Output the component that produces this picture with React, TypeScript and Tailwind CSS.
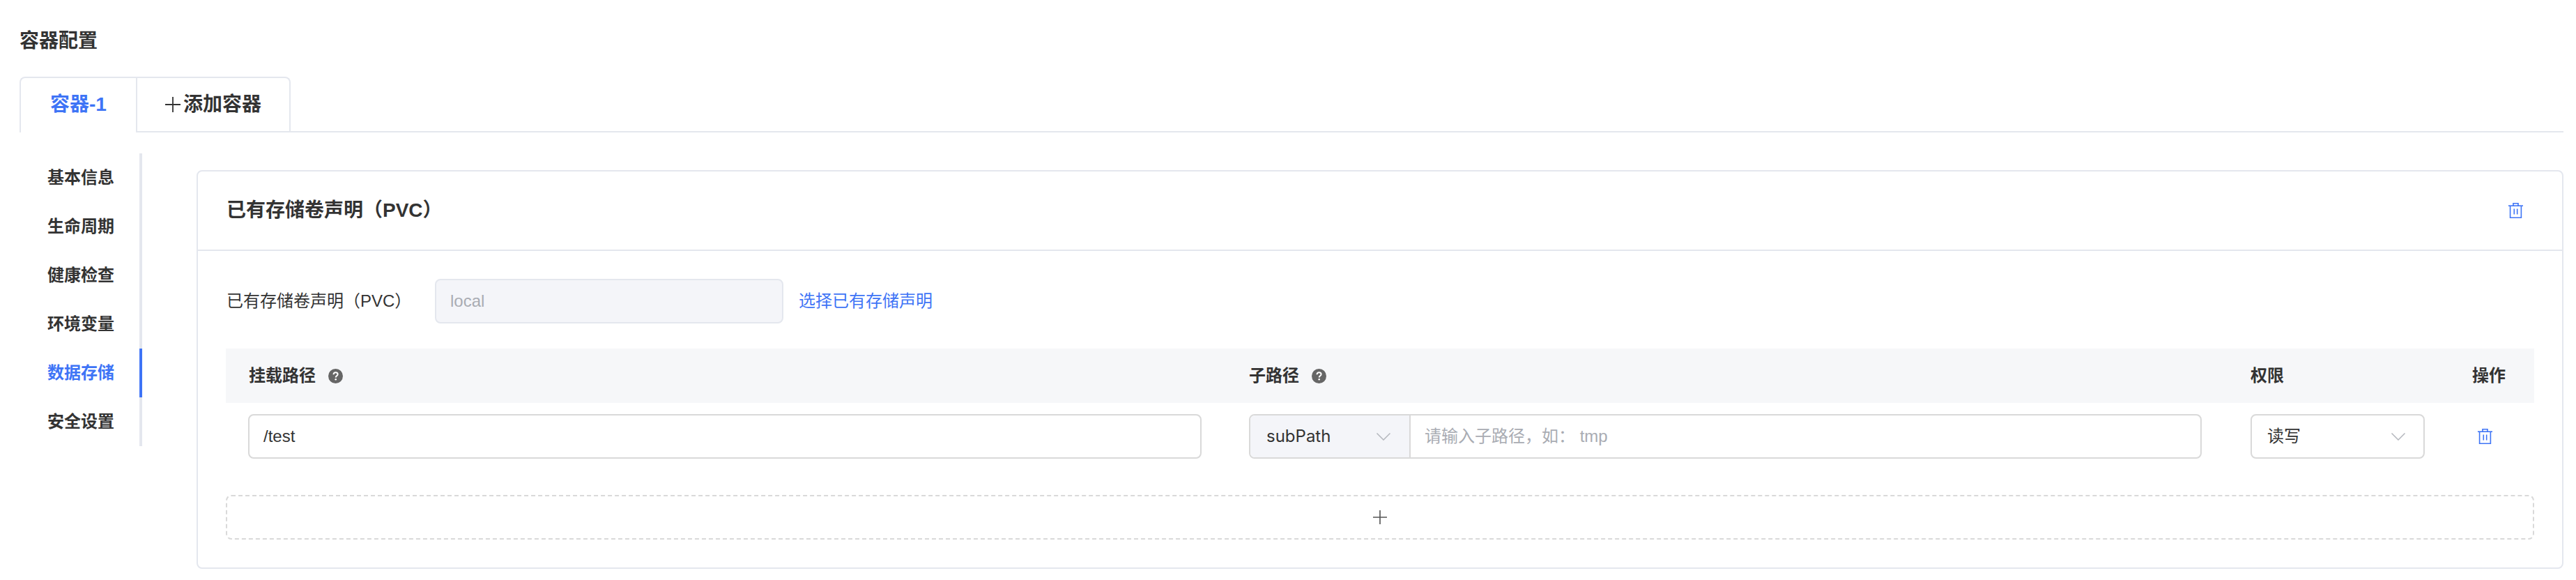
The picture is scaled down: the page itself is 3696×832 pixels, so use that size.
import React from "react";

const Trash = () => (
  <svg width="21" height="22" viewBox="0 0 21 22" fill="none" stroke="#3e74f6" strokeWidth="1.6">
    <path d="M0 4.2H21" />
    <path d="M7 4V0.8H14V4" />
    <path d="M2.6 4.2V21.2H18.4V4.2" />
    <path d="M8.3 8.5V16.5M12.7 8.5V16.5" />
  </svg>
);

const Help = () => (
  <svg width="21" height="21" viewBox="0 0 21 21">
    <circle cx="10.5" cy="10.5" r="10.5" fill="#666666" />
    <path d="M7.5 8.2C7.6 6.4 8.9 5.3 10.6 5.3C12.3 5.3 13.6 6.4 13.6 7.9C13.6 9.9 10.7 10 10.7 12.4" fill="none" stroke="#fff" strokeWidth="2" />
    <circle cx="10.7" cy="15.3" r="1.3" fill="#fff" />
  </svg>
);

const Chevron = () => (
  <svg width="20" height="11" viewBox="0 0 20 11" fill="none" stroke="#b4b7bd" strokeWidth="1.5">
    <path d="M0.5 0.5L10 10L19.5 0.5" />
  </svg>
);

const Plus = ({ size, color }: { size: number; color: string }) => (
  <svg width={size} height={size} viewBox="0 0 22 22" fill="none" stroke={color} strokeWidth="1.8">
    <path d="M0 11H22M11 0V22" />
  </svg>
);

const menu = ["基本信息", "生命周期", "健康检查", "环境变量", "数据存储", "安全设置"];

const colTemplate = "grid grid-cols-[1436px_1437px_318px_1fr]";

export default function App() {
  return (
    <div className="w-[3696px] h-[832px] overflow-hidden bg-white pt-[43px] pl-[28px] pr-[18px] font-['Liberation_Sans','Noto_Sans_CJK_SC',sans-serif] text-[#333333] text-[24px]">
      <h1 className="text-[28px] leading-[32px] font-semibold">容器配置</h1>

      <div className="mt-[35px] flex h-[80px] border-b-2 border-[#e4e7ee]">
        <div className="-mb-[2px] flex h-[80px] w-[167px] items-center justify-center rounded-tl-[8px] border-t-2 border-l-2 border-[#e4e7ee] bg-white pb-[2px] text-[28px] font-semibold text-[#3e74f6]">
          容器-1
        </div>
        <div className="flex w-[222px] items-center justify-center gap-[4px] rounded-tr-[8px] border-x-2 border-t-2 border-[#e4e7ee] text-[28px] font-semibold">
          <Plus size={22} color="#333333" />
          添加容器
        </div>
      </div>

      <div className="mt-[30px] flex">
        <nav className="h-[420px] w-[176px] shrink-0 border-r-4 border-[#e4e7ee]">
          {menu.map((m, i) => (
            <div
              key={m}
              className={
                i === 4
                  ? "-mr-[4px] flex h-[70px] items-center border-r-4 border-[#3e74f6] pl-[40px] font-semibold text-[#3e74f6]"
                  : "flex h-[70px] items-center pl-[40px] font-semibold"
              }
            >
              {m}
            </div>
          ))}
        </nav>

        <section className="mt-[24px] ml-[78px] h-[572px] w-[3396px] rounded-[8px] border-2 border-[#e4e7ee]">
          <header className="flex h-[114px] items-center justify-between border-b-2 border-[#e4e7ee] pr-[56px] pl-[41px]">
            <h2 className="text-[28px] font-semibold">已有存储卷声明（PVC）</h2>
            <Trash />
          </header>

          <div className="px-[40px]">
            <div className="mt-[40px] flex h-[64px] items-center">
              <label className="w-[300px] pl-[1px]">已有存储卷声明（PVC）</label>
              <div className="flex h-[64px] w-[500px] items-center rounded-[8px] border-2 border-[#e4e7ee] bg-[#f4f5f9] px-[20px] text-[#a9acb3]">
                local
              </div>
              <a className="ml-[22px] text-[#3e74f6]">选择已有存储声明</a>
            </div>

            <div className={`${colTemplate} mt-[36px] h-[78px] items-center bg-[#f6f7f9] pl-[32px] font-semibold`}>
              <div className="flex items-center gap-[18px] pl-[1px]">
                挂载路径 <Help />
              </div>
              <div className="flex items-center gap-[18px]">
                子路径 <Help />
              </div>
              <div>权限</div>
              <div>操作</div>
            </div>

            <div className={`${colTemplate} mt-[16px] h-[64px] items-center pl-[32px]`}>
              <div className="flex h-[64px] w-[1368px] items-center rounded-[8px] border-2 border-[#d9d9d9] px-[20px]">/test</div>
              <div className="flex h-[64px] w-[1367px] rounded-[8px] border-2 border-[#d9d9d9]">
                <div className="flex w-[230px] items-center justify-between rounded-l-[6px] border-r-2 border-[#d9d9d9] bg-[#f4f5f9] pr-[27px] pl-[23px] font-['Inter',sans-serif]">
                  subPath
                  <Chevron />
                </div>
                <div className="flex flex-1 items-center px-[20px] text-[#a9acb3]">请输入子路径，如：&nbsp;tmp</div>
              </div>
              <div className="flex h-[64px] w-[250px] items-center justify-between rounded-[8px] border-2 border-[#d9d9d9] pr-[26px] pl-[22px]">
                读写
                <Chevron />
              </div>
              <div className="pl-[8px]">
                <Trash />
              </div>
            </div>

            <div className="mt-[52px] flex h-[64px] items-center justify-center rounded-[8px] border-2 border-dashed border-[#d9d9d9]">
              <Plus size={20} color="#555555" />
            </div>
          </div>
        </section>
      </div>
    </div>
  );
}
